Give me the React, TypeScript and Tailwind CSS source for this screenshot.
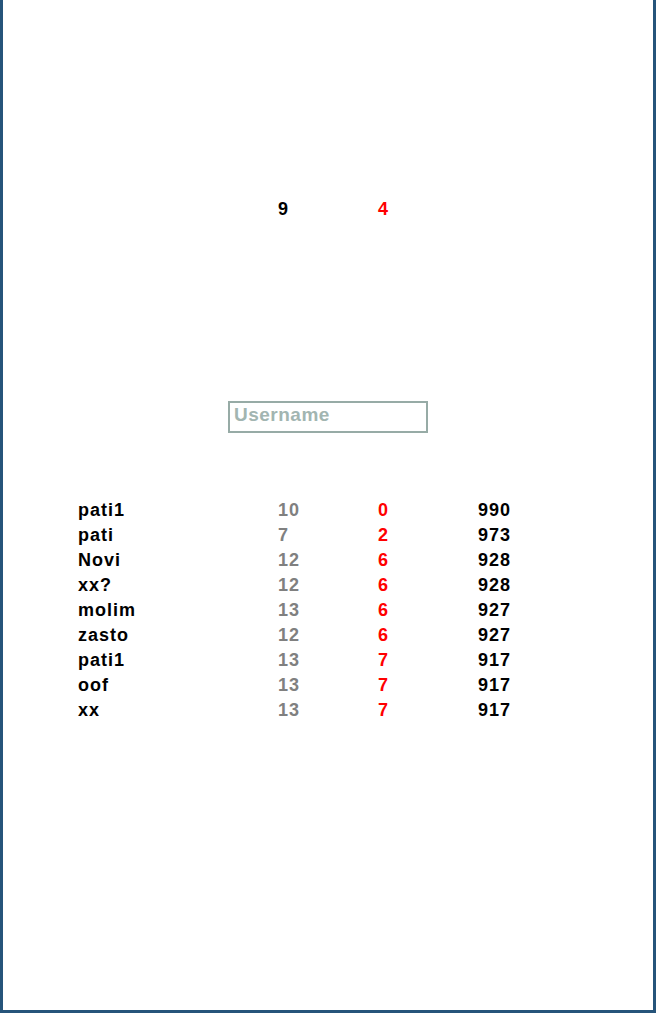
export default function App() {
  const rows: [string, number, number, number][] = [
    ["pati1", 10, 0, 990],
    ["pati", 7, 2, 973],
    ["Novi", 12, 6, 928],
    ["xx?", 12, 6, 928],
    ["molim", 13, 6, 927],
    ["zasto", 12, 6, 927],
    ["pati1", 13, 7, 917],
    ["oof", 13, 7, 917],
    ["xx", 13, 7, 917],
  ];
  return (
    <div
      className="flex h-[1013px] w-[656px] flex-col border-x-[3px] border-b-[3px] border-[#26547a] bg-white text-[18px] font-semibold tracking-[1px]"
      style={{ fontFamily: '"Liberation Sans", Arial, sans-serif' }}
    >
      <div className="mx-auto mt-[197px] grid w-[500px] grid-cols-[200px_100px_100px_100px] leading-[25px]">
        <div />
        <div className="text-black">9</div>
        <div className="text-[#ff0000]">4</div>
        <div />
      </div>
      <div className="mx-auto mt-[179px] flex h-[32px] w-[200px] items-center border-2 border-[#97aba6] pb-[4px] pl-[4px]">
        <span className="text-[19px] font-bold tracking-[0.5px] text-[#a2b5b1]">Username</span>
      </div>
      <div className="mx-auto mt-[65px] w-[500px]">
        {rows.map((r, i) => (
          <div key={i} className="grid grid-cols-[200px_100px_100px_100px] leading-[25px]">
            <div className="text-black">{r[0]}</div>
            <div className="text-[#808080]">{r[1]}</div>
            <div className="text-[#ff0000]">{r[2]}</div>
            <div className="text-black">{r[3]}</div>
          </div>
        ))}
      </div>
    </div>
  );
}
